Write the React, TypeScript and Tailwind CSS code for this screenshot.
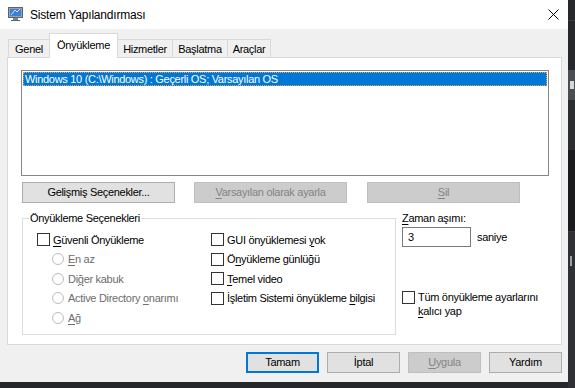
import React from 'react';

const TABS = [
  { label: 'Genel', w: 'w-[42px]' },
  { label: 'Önyükleme', w: 'w-[69px]', active: true },
  { label: 'Hizmetler', w: 'w-[56px]' },
  { label: 'Başlatma', w: 'w-[56px]' },
  { label: 'Araçlar', w: 'w-[44px]' },
];

// access key: the underlined letter
const Key: React.FC<{ children: React.ReactNode }> = ({ children }) => (
  <span className="underline underline-offset-[2px] decoration-[1px]">{children}</span>
);

const Btn: React.FC<{ children: React.ReactNode; disabled?: boolean; primary?: boolean; w: string }> = ({
  children,
  disabled,
  primary,
  w,
}) => (
  <div
    className={`${w} h-[21px] flex items-center justify-center text-[11px] leading-none whitespace-nowrap ${
      disabled
        ? 'bg-[#cccccc] border border-[#bfbfbf] text-[#838383]'
        : primary
        ? 'bg-[#e1e1e1] border-2 border-[#0078d7] text-black'
        : 'bg-[#e1e1e1] border border-[#adadad] text-black'
    }`}
  >
    <span>{children}</span>
  </div>
);

const Check: React.FC<{ children: React.ReactNode }> = ({ children }) => (
  <div className="flex items-center h-[19.5px]">
    <div className="w-[13px] h-[13px] border border-[#333333] bg-white shrink-0" />
    <span className="ml-[3px] text-[11px] leading-[14px] whitespace-nowrap">{children}</span>
  </div>
);

const Radio: React.FC<{ children: React.ReactNode }> = ({ children }) => (
  <div className="flex items-center h-[19.5px] pl-[15px]">
    <div className="w-[12px] h-[12px] rounded-full border border-[#bcbcbc] bg-white shrink-0" />
    <span className="ml-[4px] text-[11px] leading-[14px] text-[#6d6d6d] whitespace-nowrap">{children}</span>
  </div>
);

const App: React.FC = () => {
  return (
    <div className="w-[575px] h-[388px] bg-[#25272b] flex font-['Liberation_Sans',Arial,sans-serif] tracking-[-0.3px] text-black select-none overflow-hidden">
      {/* Dialog window */}
      <div className="w-[568px] h-[382px] bg-[#f0f0f0] flex flex-col shrink-0">
        {/* Title bar */}
        <div className="h-[29px] bg-white flex items-center shrink-0">
          <svg width="15" height="14" viewBox="0 0 15 14" className="ml-[8px] mt-[-2px]">
            <rect x="0.5" y="0.5" width="14" height="10" fill="#9aa3ad" stroke="#5b6570" />
            <rect x="2" y="2" width="11" height="7" fill="#3d7fd6" />
            <path d="M3 8 L7 3 L9 5 L12 2" stroke="#cfe6ff" strokeWidth="1" fill="none" />
            <rect x="5" y="11" width="5" height="2" fill="#7c8590" />
            <rect x="3" y="13" width="9" height="1" fill="#5b6570" />
          </svg>
          <span className="ml-[7px] text-[12px] tracking-[-0.2px] leading-none">Sistem Yapılandırması</span>
          <svg width="11" height="11" viewBox="0 0 11 11" className="ml-auto mr-[9px]">
            <path d="M0.5 0.5 L10.5 10.5 M10.5 0.5 L0.5 10.5" stroke="#000" strokeWidth="1" />
          </svg>
        </div>

        {/* Tabs */}
        <div className="flex items-end pl-[8px] pt-[4px] h-[28px] shrink-0">
          {TABS.map((t) =>
            t.active ? (
              <div
                key={t.label}
                className={`${t.w} -ml-px h-[25px] -mb-px bg-white border border-b-0 border-[#d9d9d9] relative z-10 flex items-start justify-center pt-[4px] text-[11px] leading-[14px]`}
              >
                {t.label}
              </div>
            ) : (
              <div
                key={t.label}
                className={`${t.w} -ml-px first:ml-0 h-[18px] bg-[#f0f0f0] border border-b-0 border-[#d9d9d9] flex items-center justify-center text-[11px] leading-[14px]`}
              >
                {t.label}
              </div>
            )
          )}
        </div>

        {/* Tab panel */}
        <div className="ml-[7px] w-[555px] h-[288px] bg-white border border-[#d9d9d9] flex flex-col pl-[13px] pt-[12px] shrink-0">
          {/* OS list */}
          <div className="w-[528px] h-[106px] border border-[#828790] bg-white p-px">
            <div className="h-[14px] bg-[#0078d7] border border-dotted border-[#f0a040] text-white text-[11px] leading-[12px] pl-[1px] whitespace-nowrap">
              Windows 10 (C:\Windows) : Geçerli OS; Varsayılan OS
            </div>
          </div>

          {/* List buttons */}
          <div className="flex mt-[6px] pl-[1px]">
            <Btn w="w-[153px]">Gelişmiş Seçenekler...</Btn>
            <div className="ml-[19px]">
              <Btn w="w-[153px]" disabled>
                <Key>V</Key>arsayılan olarak ayarla
              </Btn>
            </div>
            <div className="ml-[20px]">
              <Btn w="w-[153px]" disabled>
                <Key>S</Key>il
              </Btn>
            </div>
          </div>

          {/* Options */}
          <div className="flex mt-[8px] pl-[1px]">
            <fieldset className="w-[374px] min-w-0 h-[124px] border border-[#dcdcdc] pl-[14px]">
              <legend className="ml-[-8px] px-[1px] text-[11px] leading-[14px]">Önyükleme Seçenekleri</legend>
              <div className="flex pt-[5px]">
                <div className="w-[174px] flex flex-col">
                  <Check>
                    <Key>G</Key>üvenli Önyükleme
                  </Check>
                  <Radio>
                    <Key>E</Key>n az
                  </Radio>
                  <Radio>
                    Di<Key>ğ</Key>er kabuk
                  </Radio>
                  <Radio>
                    Active Directory <Key>o</Key>narımı
                  </Radio>
                  <Radio>
                    <Key>A</Key>ğ
                  </Radio>
                </div>
                <div className="flex flex-col">
                  <Check>
                    GUI önyüklemesi <Key>y</Key>ok
                  </Check>
                  <Check>
                    Ö<Key>n</Key>yükleme günlüğü
                  </Check>
                  <Check>
                    <Key>T</Key>emel video
                  </Check>
                  <Check>
                    İşletim Sistemi önyükleme <Key>b</Key>ilgisi
                  </Check>
                </div>
              </div>
            </fieldset>

            <div className="ml-[6px] flex flex-col">
              <span className="text-[11px] leading-[14px]">
                <Key>Z</Key>aman aşımı:
              </span>
              <div className="flex items-center mt-[2px]">
                <div className="w-[69px] h-[20px] border border-[#7a7a7a] bg-white pl-[5px] flex items-center text-[11px] leading-none">
                  3
                </div>
                <span className="ml-[6px] text-[11px] leading-none">saniye</span>
              </div>
              <div className="flex items-start mt-[43px]">
                <div className="w-[13px] h-[13px] border border-[#333333] bg-white shrink-0 mt-[1px]" />
                <div className="ml-[3px] text-[11px] leading-[14px] flex flex-col">
                  <span className="whitespace-nowrap">Tüm önyükleme ayarlarını</span>
                  <span className="whitespace-nowrap">
                    <Key>k</Key>alıcı yap
                  </span>
                </div>
              </div>
            </div>
          </div>
        </div>

        {/* Dialog buttons */}
        <div className="flex justify-end gap-[8px] pr-[6px] mt-[7px]">
          <Btn w="w-[73px]" primary>
            Tamam
          </Btn>
          <Btn w="w-[73px]">İptal</Btn>
          <Btn w="w-[73px]" disabled>
            <Key>U</Key>ygula
          </Btn>
          <Btn w="w-[73px]">Yardım</Btn>
        </div>
      </div>

      {/* Desktop strip on the right */}
      <div className="flex-1 flex flex-col">
        <div className="h-[21px] bg-[#26282c] border-b border-[#3a3c40]" />
        <div className="h-[49px] bg-[#26282c]" />
        <div className="h-[30px] bg-[#4a4d52] flex items-center">
          <div className="w-[4px] h-[8px] bg-[#d8d8d8] ml-[2px]" />
        </div>
        <div className="h-[50px] bg-[#2b2d31]" />
        <div className="h-[82px] bg-[#1b1b1d] border-b border-[#3a3c40]" />
        <div className="flex-1 bg-[#2e3035] pt-[24px] pl-[2px]">
          <div className="w-[2px] h-[10px] bg-[#9aa0a8]" />
        </div>
      </div>
    </div>
  );
};

export default App;
